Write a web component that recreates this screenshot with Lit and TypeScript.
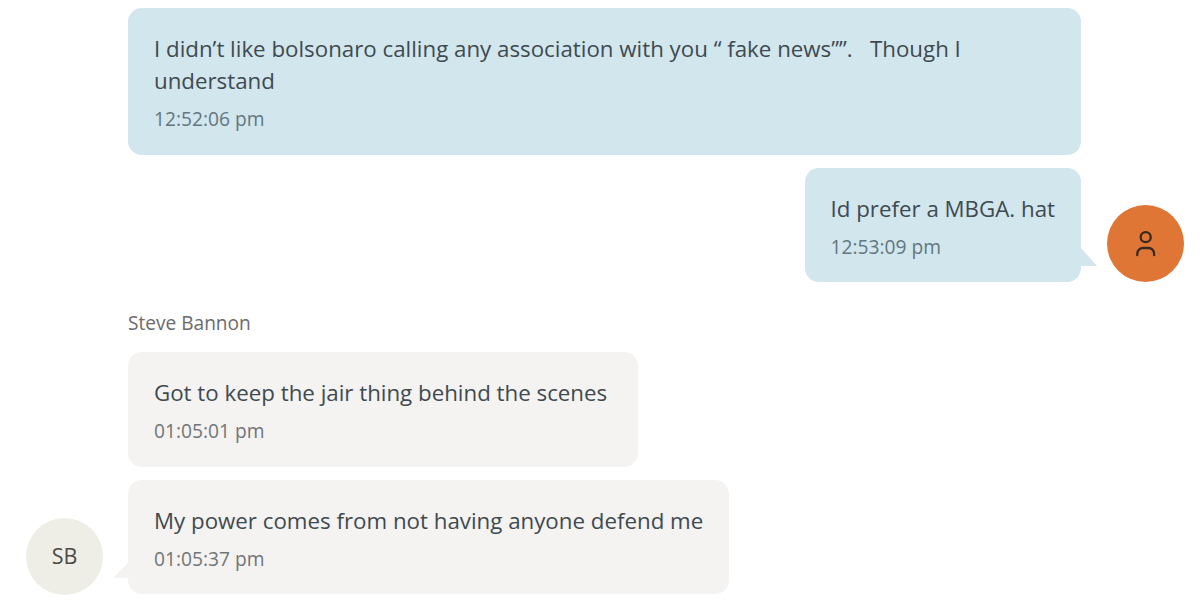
import { LitElement, html, css, nothing } from 'lit';
import { customElement } from 'lit/decorators.js';

type Message = { text: string; time: string };

const personIcon = html`
  <svg width="24" height="30" viewBox="0 0 24 30" fill="none" stroke="#3a2a1e" stroke-width="2.3" stroke-linecap="round">
    <circle cx="11.7" cy="8.2" r="5"></circle>
    <path d="M3.3 26.2v-1.5a5.7 5.7 0 0 1 5.7-5.7h5.4a5.7 5.7 0 0 1 5.7 5.7v1.5"></path>
  </svg>
`;

@customElement('app-root')
export class AppRoot extends LitElement {
  static styles = css`
    :host {
      display: block;
      height: 615px;
      overflow: hidden;
      background: #fff;
      font-family: 'Open Sans', 'Liberation Sans', sans-serif;
      color: #3f4a4f;
    }

    .thread {
      display: flex;
      flex-direction: column;
      gap: 13px;
      padding: 8px 16px 0 26px;
    }

    .row {
      display: flex;
      align-items: flex-end;
      gap: 25px;
      padding-left: 102px;
    }

    .row.mine {
      justify-content: flex-end;
      gap: 26px;
    }

    .row.with-avatar {
      padding-left: 0;
    }

    .row.wide {
      padding-right: 103px;
    }

    .row.roomy .bubble {
      padding-right: 31px;
    }

    .bubble {
      position: relative;
      box-sizing: border-box;
      padding: 25px 26px 22.5px;
      border-radius: 14px;
      background: #f4f3f1;
      font-size: 22.3px;
      line-height: 32px;
    }

    .mine .bubble,
    .wide .bubble {
      background: #d2e6ee;
    }

    .mine .bubble {
      padding-left: 25.5px;
    }

    .wide .bubble {
      flex: 1;
    }

    .time {
      margin-top: 9px;
      font-size: 19.2px;
      line-height: 26px;
      color: #6f7678;
    }

    .mine .time,
    .wide .time {
      color: #62777f;
    }

    .tail {
      position: absolute;
      bottom: 16px;
    }

    .mine .tail {
      right: -16px;
      width: 16px;
      height: 18px;
      background: #d2e6ee;
      clip-path: polygon(0 0, 100% 100%, 0 100%);
    }

    .theirs .tail {
      left: -15px;
      width: 15px;
      height: 15px;
      background: #f4f3f1;
      clip-path: polygon(100% 0, 100% 100%, 0 100%);
    }

    .avatar {
      flex: none;
      display: flex;
      align-items: center;
      justify-content: center;
      width: 77px;
      height: 77px;
      border-radius: 50%;
      font-size: 21.5px;
    }

    .avatar.user {
      background: #df7636;
    }

    .avatar.initials {
      margin-bottom: -1px;
      padding-bottom: 2px;
      box-sizing: border-box;
      background: #eeeee6;
      color: #4a4a48;
    }

    .name {
      margin: 15px 0 3px 102px;
      font-size: 19.1px;
      line-height: 26px;
      color: #6b6b6b;
    }
  `;

  bubble(m: Message, tail = false) {
    return html`
      <div class="bubble">
        ${tail ? html`<span class="tail"></span>` : nothing}
        <div>${m.text}</div>
        <div class="time">${m.time}</div>
      </div>
    `;
  }

  render() {
    return html`
      <div class="thread">
        <div class="row wide">
          ${this.bubble({
            text: 'I didn’t like bolsonaro calling any association with you “ fake news””.\u00a0\u00a0 Though I understand',
            time: '12:52:06 pm',
          })}
        </div>
        <div class="row mine">
          ${this.bubble({ text: 'Id prefer a MBGA. hat', time: '12:53:09 pm' }, true)}
          <div class="avatar user">${personIcon}</div>
        </div>
        <div class="name">Steve Bannon</div>
        <div class="row theirs roomy">
          ${this.bubble({ text: 'Got to keep the jair thing behind the scenes', time: '01:05:01 pm' })}
        </div>
        <div class="row theirs with-avatar">
          <div class="avatar initials">SB</div>
          ${this.bubble({ text: 'My power comes from not having anyone defend me', time: '01:05:37 pm' }, true)}
        </div>
      </div>
    `;
  }
}
